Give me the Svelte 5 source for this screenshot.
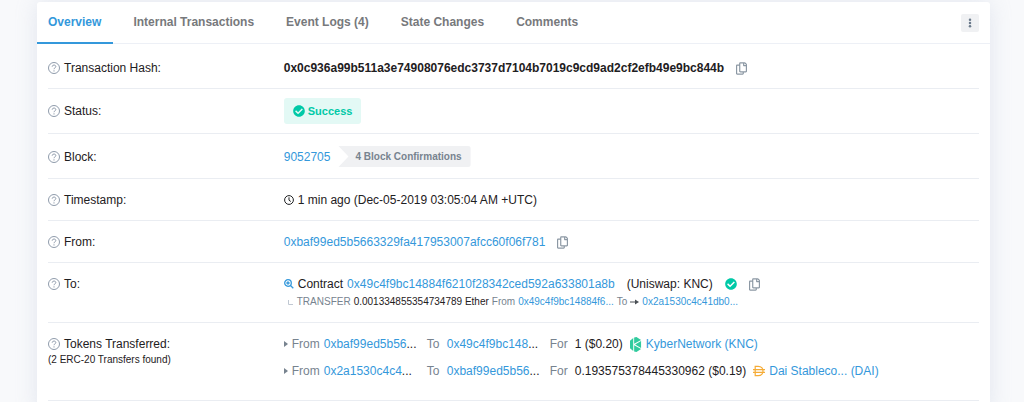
<script lang="ts">
  type Transfer = {
    from: string;
    to: string;
    amount: string;
    token: string;
    logo: "knc" | "dai";
  };

  const tabs = ["Overview", "Internal Transactions", "Event Logs (4)", "State Changes", "Comments"];

  const transfers: Transfer[] = [
    {
      from: "0xbaf99ed5b56",
      to: "0x49c4f9bc148",
      amount: "1 ($0.20)",
      token: "KyberNetwork (KNC)",
      logo: "knc",
    },
    {
      from: "0x2a1530c4c4",
      to: "0xbaf99ed5b56",
      amount: "0.193575378445330962 ($0.19)",
      token: "Dai Stableco... (DAI)",
      logo: "dai",
    },
  ];

  let activeTab = $state("Overview");
</script>

{#snippet label(text: string)}
  <svg class="help" viewBox="0 0 12 12" aria-hidden="true">
    <circle cx="6" cy="6" r="5.5" />
    <path d="M4.2 4.7c0-2.200 3.600-2.200 3.600-.1C7.800 5.900 6 5.800 6 7.200M6 8.300v1.200" />
  </svg>
  <span>{text}:</span>
{/snippet}

{#snippet check()}
  <svg class="check" viewBox="0 0 512 512" aria-hidden="true">
    <path d="M504 256c0 136.967-111.033 248-248 248S8 392.967 8 256 119.033 8 256 8s248 111.033 248 248zM227.314 387.314l184-184c6.248-6.248 6.248-16.379 0-22.627l-22.627-22.627c-6.248-6.249-16.379-6.249-22.628 0L216 308.118l-70.059-70.059c-6.248-6.248-16.379-6.248-22.628 0l-22.627 22.627c-6.248 6.248-6.248 16.379 0 22.627l104 104c6.249 6.249 16.379 6.249 22.628.001z" />
  </svg>
{/snippet}

{#snippet copyButton(name: string)}
  <button class="copy" type="button" aria-label={name}>
    <svg viewBox="0 0 448 512" aria-hidden="true">
      <path d="M433.941 65.941l-51.882-51.882A48 48 0 0 0 348.118 0H176c-26.51 0-48 21.49-48 48v48H48c-26.51 0-48 21.49-48 48v320c0 26.51 21.49 48 48 48h224c26.51 0 48-21.49 48-48v-48h80c26.51 0 48-21.49 48-48V99.882a48 48 0 0 0-14.059-33.941zM266 464H54a6 6 0 0 1-6-6V150a6 6 0 0 1 6-6h74v224c0 26.51 21.49 48 48 48h96v42a6 6 0 0 1-6 6zm128-96H182a6 6 0 0 1-6-6V54a6 6 0 0 1 6-6h106v88c0 13.255 10.745 24 24 24h88v202a6 6 0 0 1-6 6zm6-256h-64V48h9.632c1.591 0 3.117.632 4.243 1.757l48.368 48.368a6 6 0 0 1 1.757 4.243V112z" />
    </svg>
  </button>
{/snippet}

<main>
  <section class="card">
    <header>
      <nav>
        {#each tabs as tab}
          <button
            class="tab"
            class:active={activeTab === tab}
            type="button"
            onclick={() => (activeTab = tab)}
          >
            {tab}
          </button>
        {/each}
      </nav>
      <button class="more" type="button" aria-label="More options">
        <svg viewBox="0 0 4 12" aria-hidden="true">
          <circle cx="2" cy="2" r="1.500" />
          <circle cx="2" cy="6" r="1.500" />
          <circle cx="2" cy="10" r="1.500" />
        </svg>
      </button>
    </header>

    <dl>
      <div class="row">
        <dt>{@render label("Transaction Hash")}</dt>
        <dd class="line spaced">
          <strong>0x0c936a99b511a3e74908076edc3737d7104b7019c9cd9ad2cf2efb49e9bc844b</strong>
          {@render copyButton("Copy transaction hash")}
        </dd>
      </div>

      <div class="row badge-row">
        <dt>{@render label("Status")}</dt>
        <dd class="line">
          <span class="status">{@render check()}Success</span>
        </dd>
      </div>

      <div class="row">
        <dt>{@render label("Block")}</dt>
        <dd class="line block">
          <a href="#block">9052705</a>
          <span class="confirmations">4 Block Confirmations</span>
        </dd>
      </div>

      <div class="row">
        <dt>{@render label("Timestamp")}</dt>
        <dd class="line">
          <svg class="clock" viewBox="0 0 10 10" aria-hidden="true">
            <circle cx="5" cy="5" r="4.400" />
            <path d="M5 2.300V5.200L6.800 6.500" />
          </svg>
          <span>1 min ago (Dec-05-2019 03:05:04 AM +UTC)</span>
        </dd>
      </div>

      <div class="row">
        <dt>{@render label("From")}</dt>
        <dd class="line spaced">
          <a href="#from">0xbaf99ed5b5663329fa417953007afcc60f06f781</a>
          {@render copyButton("Copy sender address")}
        </dd>
      </div>

      <div class="row">
        <dt>{@render label("To")}</dt>
        <dd>
          <div class="line spaced">
            <span class="line">
              <svg class="search" viewBox="0 0 10 10" aria-hidden="true">
                <circle cx="4" cy="4" r="3.300" />
                <path d="M6.500 6.500L9.300 9.300M2.300 4h3.400M4 2.300v3.400" />
              </svg>
              <span>Contract</span>
              <a href="#contract">0x49c4f9bc14884f6210f28342ced592a633801a8b</a>
            </span>
            <span>(Uniswap: KNC)</span>
            {@render check()}
            {@render copyButton("Copy contract address")}
          </div>
          <div class="line internal">
            <svg class="branch" viewBox="0 0 5 5" aria-hidden="true"><path d="M.5 0v4.500H5" /></svg>
            <span class="muted">TRANSFER</span>
            <span>0.001334855354734789 Ether</span>
            <span class="muted">From</span>
            <a href="#transfer-from">0x49c4f9bc14884f6...</a>
            <span class="muted">To</span>
            <svg class="arrow" viewBox="0 0 9 6" aria-hidden="true">
              <path d="M0 3h6" />
              <path class="head" d="M5 .5L9 3 5 5.500z" />
            </svg>
            <a href="#transfer-to">0x2a1530c4c41db0...</a>
          </div>
        </dd>
      </div>

      <div class="row tokens">
        <dt>
          {@render label("Tokens Transferred")}
          <small>(2 ERC-20 Transfers found)</small>
        </dt>
        <dd>
          <ul>
            {#each transfers as transfer}
              <li class="line">
                <svg class="caret" viewBox="0 0 4 6" aria-hidden="true"><path d="M0 0l4 3-4 3z" /></svg>
                <span class="muted from">From</span>
                <span class="address"><a href="#sender">{transfer.from}</a>...</span>
                <span class="muted to">To</span>
                <span class="address"><a href="#recipient">{transfer.to}</a>...</span>
                <span class="muted for">For</span>
                <span class="amount">{transfer.amount}</span>
                {#if transfer.logo === "knc"}
                  <svg class="logo knc" viewBox="0 0 13 16" aria-hidden="true">
                    <path d="M0 4L3.500 1v14L0 12zM4.500 .5L7 0l5 3-7.500 4.200zM5.500 8L12 4.200v7.600zM4.500 8.800L12 13l-5 3-2.500-.5z" />
                  </svg>
                {:else}
                  <svg class="logo dai" viewBox="0 0 12 12" aria-hidden="true">
                    <path d="M2.200 1.300h3c6.400 0 6.400 9.400 0 9.400h-3zM0 4.700h12M0 7.300h12" />
                  </svg>
                {/if}
                <a href="#token">{transfer.token}</a>
              </li>
            {/each}
          </ul>
        </dd>
      </div>
    </dl>
  </section>
</main>

<style>
  :global(body) {
    margin: 0;
    background: #f8f9fb;
  }

  main {
    padding: 2px 34px 0 37px;
    overflow: hidden;
    color: #1e2022;
    font: 12px/18px "Liberation Sans", Arial, sans-serif;
  }

  .card {
    background: #fff;
    border-radius: 3px 3px 0 0;
    box-shadow: 0 0 22px rgba(160, 170, 200, 0.24);
  }

  header {
    display: flex;
    align-items: center;
    justify-content: space-between;
    padding-right: 11px;
    border-bottom: 1px solid #edf0f6;
  }

  nav {
    display: flex;
    gap: 9px;
    margin-bottom: -1px;
  }

  button {
    border: 0;
    padding: 0;
    background: none;
    font: inherit;
    cursor: pointer;
  }

  .tab {
    padding: 11px 12px 11px 11px;
    border-bottom: 2px solid transparent;
    color: #77797c;
    font-weight: bold;
    white-space: nowrap;
  }

  .tab.active {
    border-color: #3498db;
    color: #3498db;
  }

  .more {
    display: flex;
    align-items: center;
    justify-content: center;
    width: 18px;
    height: 18px;
    border-radius: 2px;
    background: #f0f1f3;
  }

  .more svg {
    width: 4px;
    height: 10px;
    fill: #6b7a8b;
  }

  dl {
    margin: 0;
    padding: 3px 11px 12px;
  }

  .row {
    display: grid;
    grid-template-columns: 1fr 3fr;
    column-gap: 4px;
    align-items: center;
    padding: 12px 0 11px;
    border-bottom: 1px solid #eaedf2;
  }

  .row.badge-row {
    padding: 9px 0;
  }

  .row.tokens {
    padding-bottom: 20px;
  }

  /* labels stay level with the first line of a two-line value */
  .row:nth-last-child(-n + 2) dt {
    align-self: start;
  }

  dt {
    display: flex;
    flex-wrap: wrap;
    align-items: center;
    column-gap: 4px;
  }

  dd {
    margin: 0;
  }

  a {
    color: #3498db;
    text-decoration: none;
  }

  svg {
    flex: none;
  }

  .line {
    display: flex;
    align-items: center;
    gap: 4px;
    white-space: nowrap;
  }

  .line.block {
    gap: 8px;
  }

  .line.spaced {
    gap: 12px;
  }

  .help {
    width: 12px;
    height: 12px;
    fill: none;
    stroke: #8f9bab;
  }

  .check {
    width: 12px;
    height: 12px;
    fill: #00c9a7;
  }

  .copy {
    display: flex;
  }

  .copy svg {
    width: 11px;
    height: 13px;
    fill: #8c98a4;
  }

  .status {
    display: flex;
    align-items: center;
    gap: 3px;
    padding: 4px 9px;
    border-radius: 3px;
    background: #e3f9f5;
    color: #00c9a7;
    font-size: 11px;
    font-weight: bold;
  }

  .confirmations {
    padding: 2px 9px 1px 17px;
    border-radius: 0 3px 3px 0;
    background: #f0f1f3;
    clip-path: polygon(0 0, 100% 0, 100% 100%, 0 100%, 10px 50%);
    color: #77838f;
    font-size: 10px;
    font-weight: bold;
  }

  .clock {
    width: 10px;
    height: 10px;
    fill: none;
    stroke: #1e2022;
  }

  .search {
    width: 10px;
    height: 10px;
    fill: none;
    stroke: #3498db;
    stroke-width: 1.3;
  }

  .muted {
    color: #77838f;
  }

  .internal {
    font-size: 10px;
    gap: 3px;
  }

  .branch {
    width: 5px;
    height: 5px;
    margin: 0 1px 0 4px;
    fill: none;
    stroke: #c0c8d2;
  }

  .arrow {
    width: 9px;
    height: 6px;
    fill: none;
    stroke: #4a4f55;
  }

  .arrow .head {
    fill: #4a4f55;
    stroke: none;
  }

  small {
    flex-basis: 100%;
    font-size: 10px;
    line-height: 14px;
  }

  ul {
    margin: 0;
    padding: 0;
    list-style: none;
  }

  li + li {
    margin-top: 9px;
  }

  .caret {
    width: 4px;
    height: 6px;
    fill: #77838f;
  }

  .from {
    width: 28px;
  }

  .address {
    width: 99px;
  }

  .to {
    width: 16px;
  }

  .for {
    width: 21px;
  }

  .amount {
    margin-right: 3px;
  }

  .logo {
    width: 12px;
    height: 12px;
  }

  .knc {
    height: 15px;
    fill: #31cb9e;
  }

  .dai {
    fill: none;
    stroke: #f5ac37;
    stroke-width: 1.2;
  }
</style>
